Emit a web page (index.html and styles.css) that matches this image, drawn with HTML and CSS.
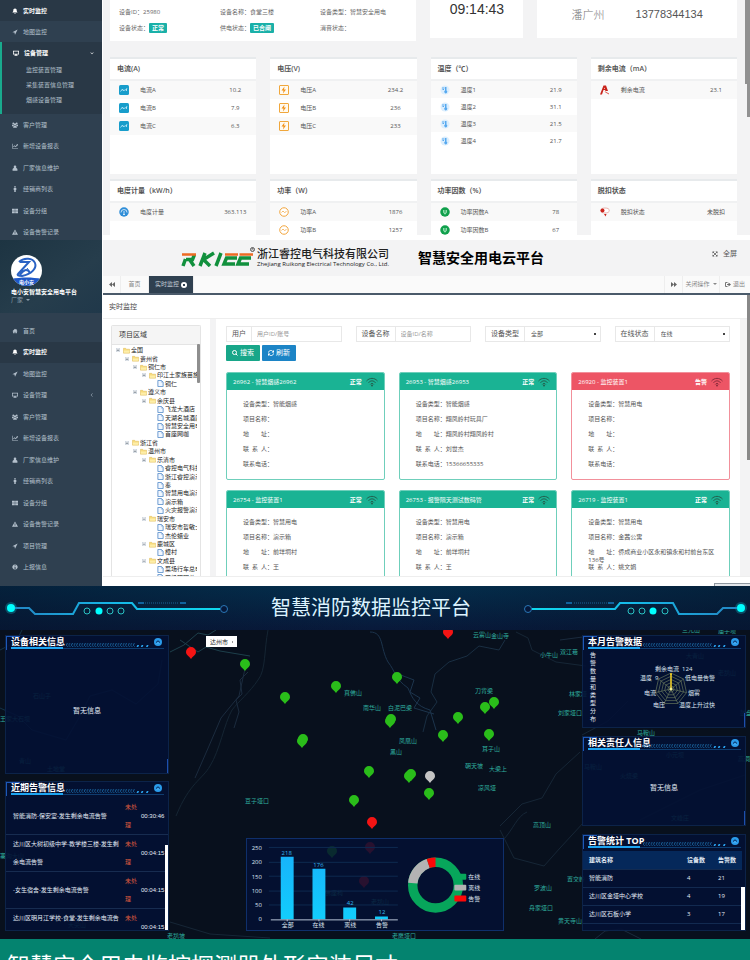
FILE: index.html
```html
<!DOCTYPE html>
<html lang="zh-CN">
<head>
<meta charset="utf-8">
<title>智慧安全用电云平台</title>
<link rel="stylesheet" href="styles.css">
</head>
<body>
<svg class="defs" aria-hidden="true">
  <defs>
    <symbol id="i-home" viewBox="0 0 16 16"><path d="M8 2 1 8.500h2V14h4v-4h2v4h4V8.500h2L12.500 6V3h-2v1.300z"/></symbol>
    <symbol id="i-bell" viewBox="0 0 16 16"><path d="M8 1c-3 0-4.500 2-4.500 5 0 3-1 4.500-2.500 6h14c-1.500-1.500-2.500-3-2.500-6 0-3-1.500-5-4.500-5zM6 13h4a2 2 0 0 1-4 0z"/></symbol>
    <symbol id="i-plane" viewBox="0 0 16 16"><path d="M15 1 1 8.500l5.500 1L8 15z"/></symbol>
    <symbol id="i-screen" viewBox="0 0 16 16"><path fill-rule="evenodd" d="M0 2h16v10h-6v1h2v2H4v-2h2v-1H0zm2 2v6h12V4z"/></symbol>
    <symbol id="i-users" viewBox="0 0 16 16"><circle cx="3.500" cy="4" r="2.500"/><circle cx="12.500" cy="4" r="2.500"/><circle cx="8" cy="6.500" r="3"/><path d="M0 7h4l1 3-2 1H0zM16 7h-4l-1 3 2 1h3zM3 15c0-4 2-5 5-5s5 1 5 5z"/></symbol>
    <symbol id="i-chart" viewBox="0 0 16 16"><path d="M0 2h1.500v11H16v1.500H0zM3 10l3.500-4 3 2.500L13 4l-1.500-1H16v4.500l-1.500-1.500-4.500 5-3-2.500L4 11.500z"/></symbol>
    <symbol id="i-user" viewBox="0 0 16 16"><circle cx="8" cy="5" r="3.500"/><path d="M1.500 15V12c0-3 2.500-4 6.500-4s6.500 1 6.500 4v3z"/></symbol>
    <symbol id="i-male" viewBox="0 0 16 16"><circle cx="8" cy="2.500" r="2.200"/><path d="M4.500 5h7v5.500H10V16H6v-5.500H4.500z"/></symbol>
    <symbol id="i-grid" viewBox="0 0 16 16"><path d="M0 2h7.500v5.500H0zM8.500 2H16v5.500H8.500zM0 8.500h7.500V14H0zM8.500 8.500H16V14H8.500z"/></symbol>
    <symbol id="i-warn" viewBox="0 0 16 16"><path fill-rule="evenodd" d="M8 1l8 14H0zM7 6v4.500h2V6zm0 5.500v2h2v-2z"/></symbol>
    <symbol id="i-info" viewBox="0 0 16 16"><path fill-rule="evenodd" d="M8 1a7 7 0 1 0 .010 0zM7 3.500h2.500v2H7zM6 7h3.500v4h1v1.500H6V11h1V8.500H6z"/></symbol>
    <symbol id="i-down" viewBox="0 0 16 16"><path d="M3 5l5 5 5-5 1 1.500-6 6-6-6z"/></symbol>
    <symbol id="i-left" viewBox="0 0 16 16"><path d="M11 2 5 8l6 6-1.500 1L3 8l6.500-7z"/></symbol>
    <symbol id="i-wave" viewBox="0 0 20 20"><rect width="20" height="20" rx="3" fill="#189dcb"/><path d="M3 13l4-5 2 4 2-2h2l3-3M15 7v5" fill="none" stroke="#d4f3ff" stroke-width="1.500"/></symbol>
    <symbol id="i-volt" viewBox="0 0 20 20"><rect x="1" y="1" width="18" height="18" rx="1" fill="#fffaf0" stroke="#f0a73c" stroke-width="2"/><path d="M11 3 5 11h4l-1 6 6-8h-4z" fill="#f29218"/></symbol>
    <symbol id="i-temp" viewBox="0 0 20 20"><circle cx="10" cy="10" r="9" fill="#dceefd"/><path d="M4 5h5v2H4zM5 8h3v2H5zM10 4h3v7a3 3 0 1 1-3 0z" fill="#57a9ef"/></symbol>
    <symbol id="i-leak" viewBox="0 0 20 20"><path fill-rule="evenodd" d="M0 19 7 1h5l4 11h-5l-1-2H7l-3 9zM8 8h2L9 5z" fill="#c9231b"/><path d="M9 12l9 5v2l-7-4z" fill="#df5147"/></symbol>
    <symbol id="i-meter" viewBox="0 0 20 20"><circle cx="10" cy="10" r="9.500" fill="#2f8ed8"/><path d="M4 11a6 6 0 0 1 12 0M10 15V8M8 15h4" fill="none" stroke="#fff" stroke-width="1.500"/></symbol>
    <symbol id="i-power" viewBox="0 0 20 20"><circle cx="10" cy="10" r="8.500" fill="#fff" stroke="#f2a63f" stroke-width="2"/><path d="M5 11l3-3 3 3 4-2" fill="none" stroke="#f2a63f" stroke-width="1.500"/></symbol>
    <symbol id="i-factor" viewBox="0 0 20 20"><circle cx="10" cy="10" r="9.500" fill="#10a04c"/><path d="M7 6v4a3 3 0 0 0 6 0V6M10 6v9" fill="none" stroke="#b8f0cc" stroke-width="1.500"/></symbol>
    <symbol id="i-trip" viewBox="0 0 20 20"><ellipse cx="10" cy="7" rx="8.500" ry="5" fill="#fff" stroke="#e39a93" stroke-width="1.500"/><circle cx="5" cy="7" r="4" fill="#cc241c"/><path d="M8 14h5l-2 5z" fill="#cc241c"/></symbol>
    <symbol id="i-wifi" viewBox="0 0 24 20"><g fill="none" stroke="currentColor" stroke-width="2"><path d="M1 8c6-7 16-7 22 0M5 11.500c4-5 10-5 14 0M8.500 15c2-3 5-3 7 0"/></g><circle cx="12" cy="17" r="2" fill="currentColor"/></symbol>
    <symbol id="i-folder" viewBox="0 0 16 14"><path d="M1 2h5l2 2h7v9H1z" fill="#f8dc7c" stroke="#d9b04a"/><path d="M2 7h13l-1 5H2z" fill="#fdeeaa"/></symbol>
    <symbol id="i-file" viewBox="0 0 14 16"><path d="M1 1h8l4 4v10H1z" fill="#f1f7ff" stroke="#5d90cc" stroke-width="2"/><path d="M9 1v4h4" fill="none" stroke="#5d90cc"/></symbol>
    <symbol id="i-minus" viewBox="0 0 10 10"><path d="M.500.500h9v9h-9z" fill="#fff" stroke="#8b9db0"/><path d="M2 4.500h6v1.500H2z" fill="#345"/></symbol>
    <symbol id="i-up" viewBox="0 0 16 16"><circle cx="8" cy="8" r="8" fill="#2a9bea"/><path d="M4 9l4-3.500L12 9" fill="none" stroke="#052050" stroke-width="2"/><path d="M5 11.500l3-2 3 2" fill="none" stroke="#7ccfff"/></symbol>
    <symbol id="pin" viewBox="-5 -5 10 12" overflow="visible"><path d="M0 7C-2 4-5 3-5 0a5 5 0 0 1 10 0c0 3-3 4-5 7z"/></symbol>
    <pattern id="hatch" width="3" height="4" patternUnits="userSpaceOnUse"><path d="M0 4 2 0" stroke="#1a6ba8" stroke-width="1"/></pattern>
    <symbol id="headline" viewBox="0 0 100 6" preserveAspectRatio="none"><rect width="80" height="4" y="1" fill="url(#hatch)"/><path d="M82 5l1-2h2l-1 2zM87 5l1-2h2l-1 2zM93 5l1-2h2l-1 2z" fill="#2aa4f0"/></symbol>
    <linearGradient id="bar" x1="0" y1="0" x2="0" y2="1"><stop offset="0" stop-color="#17b4fb"/><stop offset="1" stop-color="#12cdfc"/></linearGradient>
    <linearGradient id="wire"><stop offset="0" stop-color="#2387c4"/><stop offset=".5" stop-color="#16b9e8"/><stop offset="1" stop-color="#10d8ee"/></linearGradient>
    <g id="circuit">
      <circle cx="11" cy="22" r="6" fill="#0b7f96" opacity=".5"/><circle cx="11" cy="22" r="4" fill="#0ff"/>
      <path d="M15 22h14l6 6h38l6-11h53l5 6h83" fill="none" stroke="url(#wire)" stroke-width="2"/>
      <circle cx="224" cy="23" r="3.500" fill="#06183a" stroke="#2a78b8" stroke-width="1"/>
      <g fill="none" stroke="#2ac3c4"><circle cx="87" cy="25" r="3"/><circle cx="110" cy="25" r="3"/><circle cx="121" cy="25" r="3"/></g>
      <circle cx="99" cy="25" r="3.500" fill="#0ff"/>
      <path d="M138 17h6M180 17h6" stroke="#1679bd" stroke-width="1.500"/><path d="M145 17h34" stroke="#1b6298" stroke-dasharray="1 1"/>
    </g>
  </defs>
</svg>

<section class="device">
  <nav class="side">
    <a class="item dark" href="#"><svg><use href="#i-bell"/></svg>实时监控</a>
    <a class="item" href="#"><svg><use href="#i-plane"/></svg>地图监控</a>
    <div class="open">
      <a class="item" href="#"><svg><use href="#i-screen"/></svg>设备管理<svg class="arrow"><use href="#i-down"/></svg></a>
      <a class="sub" href="#">监控装置管理</a>
      <a class="sub" href="#">采集装置信息管理</a>
      <a class="sub" href="#">烟感设备管理</a>
    </div>
    <div class="rest">
      <a class="item" href="#"><svg><use href="#i-users"/></svg>客户管理</a>
      <a class="item" href="#"><svg><use href="#i-chart"/></svg>新增设备报表</a>
      <a class="item" href="#"><svg><use href="#i-user"/></svg>厂家信息维护</a>
      <a class="item" href="#"><svg><use href="#i-male"/></svg>经销商列表</a>
      <a class="item" href="#"><svg><use href="#i-grid"/></svg>设备分组</a>
      <a class="item" href="#"><svg><use href="#i-warn"/></svg>设备告警记录</a>
    </div>
  </nav>
  <div class="readings">
    <div class="summary">
      <div class="box facts">
        <span>设备ID：25980</span><span>设备名称：食堂三楼</span><span>设备类型：智慧安全用电</span>
        <span>设备状态：<b class="badge">正常</b></span><span>供电状态：<b class="badge">已合闸</b></span><span>消音状态：</span>
      </div>
      <div class="box clock">09:14:43</div>
      <div class="box contact"><span>潘广州</span><span class="phone">13778344134</span></div>
    </div>
    <div class="meters">
      <div class="meter"><h3>电流(A)</h3><table>
        <tr><td><svg><use href="#i-wave"/></svg></td><td>电流A</td><td>10.2</td></tr>
        <tr><td><svg><use href="#i-wave"/></svg></td><td>电流B</td><td>7.9</td></tr>
        <tr><td><svg><use href="#i-wave"/></svg></td><td>电流C</td><td>6.3</td></tr></table></div>
      <div class="meter"><h3>电压(V)</h3><table>
        <tr><td><svg><use href="#i-volt"/></svg></td><td>电压A</td><td>234.2</td></tr>
        <tr><td><svg><use href="#i-volt"/></svg></td><td>电压B</td><td>236</td></tr>
        <tr><td><svg><use href="#i-volt"/></svg></td><td>电压C</td><td>233</td></tr></table></div>
      <div class="meter tight"><h3>温度（℃）</h3><table>
        <tr><td><svg><use href="#i-temp"/></svg></td><td>温度1</td><td>21.9</td></tr>
        <tr><td><svg><use href="#i-temp"/></svg></td><td>温度2</td><td>31.1</td></tr>
        <tr><td><svg><use href="#i-temp"/></svg></td><td>温度3</td><td>21.5</td></tr>
        <tr><td><svg><use href="#i-temp"/></svg></td><td>温度4</td><td>21.7</td></tr></table></div>
      <div class="meter"><h3>剩余电流（mA）</h3><table>
        <tr><td><svg><use href="#i-leak"/></svg></td><td>剩余电流</td><td>23.1</td></tr></table></div>
      <div class="meter"><h3>电度计量（kW/h）</h3><table>
        <tr><td><svg><use href="#i-meter"/></svg></td><td>电度计量</td><td>363.113</td></tr></table></div>
      <div class="meter"><h3>功率（W）</h3><table>
        <tr><td><svg><use href="#i-power"/></svg></td><td>功率A</td><td>1876</td></tr>
        <tr><td><svg><use href="#i-power"/></svg></td><td>功率B</td><td>1257</td></tr></table></div>
      <div class="meter"><h3>功率因数（%）</h3><table>
        <tr><td><svg><use href="#i-factor"/></svg></td><td>功率因数A</td><td>78</td></tr>
        <tr><td><svg><use href="#i-factor"/></svg></td><td>功率因数B</td><td>67</td></tr></table></div>
      <div class="meter"><h3>脱扣状态</h3><table>
        <tr><td><svg><use href="#i-trip"/></svg></td><td>脱扣状态</td><td>未脱扣</td></tr></table></div>
    </div>
    <i class="scroll outer"></i><i class="scroll inner"></i>
  </div>
</section>

<section class="cloud">
  <div class="side">
    <div class="profile">
      <svg class="avatar" viewBox="0 0 31 31"><defs><clipPath id="round"><circle cx="15.500" cy="15.500" r="15.500"/></clipPath></defs><g clip-path="url(#round)"><path fill="#fff" d="M0 0h31v31H0z"/><path fill="#1f58c8" d="M0 24c10-2 21-2 31 0v7H0z"/><g fill="none" stroke="#2a62c4" stroke-width="2"><path d="M8 7c5-5 14-4 16 1s-3 11-13 13c-4 0-5-1-4-2L18 7H9M9 20c3-5 7-7 10-2"/><path d="M16 13l3 4" stroke-width="1"/></g></g><text x="15.500" y="29" text-anchor="middle" class="avatar-text">电小安</text></svg>
      <strong>电小安智慧安全用电平台</strong>
      <span>厂家 <i class="caret"></i></span>
    </div>
    <nav class="menu">
      <a class="item" href="#"><svg><use href="#i-home"/></svg>首页</a>
      <a class="item dark" href="#"><svg><use href="#i-bell"/></svg>实时监控</a>
      <a class="item" href="#"><svg><use href="#i-plane"/></svg>地图监控</a>
      <a class="item" href="#"><svg><use href="#i-screen"/></svg>设备管理<svg class="arrow"><use href="#i-left"/></svg></a>
      <a class="item" href="#"><svg><use href="#i-users"/></svg>客户管理</a>
      <a class="item" href="#"><svg><use href="#i-chart"/></svg>新增设备报表</a>
      <a class="item" href="#"><svg><use href="#i-user"/></svg>厂家信息维护</a>
      <a class="item" href="#"><svg><use href="#i-male"/></svg>经销商列表</a>
      <a class="item" href="#"><svg><use href="#i-grid"/></svg>设备分组</a>
      <a class="item" href="#"><svg><use href="#i-warn"/></svg>设备告警记录</a>
      <a class="item" href="#"><svg><use href="#i-plane"/></svg>项目管理</a>
      <a class="item" href="#"><svg><use href="#i-info"/></svg>上报信息</a>
    </nav>
  </div>
  <div class="work">
    <header class="brand">
      <svg class="logo" viewBox="0 0 76 20">
        <g fill="none" stroke="#11903d" stroke-width="4"><path d="M4 19l2.500-7M7 12.500h6.500l2-5M10.500 12.500 15 19M21 19l5-13M35 6 24.500 12.500 31 19M37 19l5-13M58 11H47.500l-2.500 6h11M72 11H61.500L59 17h11" stroke-width="3.500"/></g>
        <path d="M3 7.500h14M46 7.500h13M60.500 7.500H74" fill="none" stroke="#ed6b23" stroke-width="2.500"/>
        <circle cx="73.500" cy="2.500" r="2" fill="none" stroke="#333" stroke-width=".8"/><path d="M73 3.500V1.500h1v1l.500 1" stroke="#333" fill="none" stroke-width=".5"/>
      </svg>
      <div class="company"><b>浙江睿控电气科技有限公司</b><small>Zhejiang Ruikong Electrical Technology Co., Ltd.</small></div>
      <h1>智慧安全用电云平台</h1>
      <a class="full" href="#"><svg viewBox="0 0 12 12"><path d="M1 1h4L1 5zM11 1v4L7 1zM1 11V7l4 4zM11 11H7l4-4z" fill="#555"/><path d="M2 2l8 8M10 2l-8 8" stroke="#555" stroke-width="1.500"/></svg>全屏</a>
    </header>
    <div class="tabs">
      <button class="tab step" aria-label="向左"><svg viewBox="0 0 12 10"><path d="M6 0v10L0 5zM12 0v10L6 5z"/></svg></button>
      <a class="tab home" href="#">首页</a>
      <a class="tab active" href="#">实时监控 <svg viewBox="0 0 12 12"><circle cx="6" cy="6" r="6" fill="#fff"/><path d="M4 4l4 4M8 4l-4 4" stroke="#2f4050" stroke-width="2"/></svg></a>
      <span class="grow"></span>
      <button class="tab step" aria-label="向右"><svg viewBox="0 0 12 10"><path d="M0 0v10l6-5zM6 0v10l6-5z"/></svg></button>
      <button class="tab close">关闭操作<i class="caret"></i></button>
      <a class="tab quit" href="#"><svg viewBox="0 0 12 10"><path d="M5 1H1v8h4M4 5h5" fill="none" stroke="#777" stroke-width="2"/><path d="M7 1l5 4-5 4z"/></svg>退出</a>
    </div>
    <h2>实时监控</h2>
    <div class="split">
      <div class="treebox">
        <h3>项目区域</h3>
        <ul class="tree">
          <li><svg><use href="#i-minus"/></svg><svg><use href="#i-folder"/></svg>全国</li>
          <li class="l1"><svg><use href="#i-minus"/></svg><svg><use href="#i-folder"/></svg>贵州省</li>
          <li class="l2"><svg><use href="#i-minus"/></svg><svg><use href="#i-folder"/></svg>铜仁市</li>
          <li class="l3"><svg><use href="#i-minus"/></svg><svg><use href="#i-folder"/></svg>印江土家族苗族</li>
          <li class="l4"><svg><use href="#i-file"/></svg>铜仁</li>
          <li class="l2"><svg><use href="#i-minus"/></svg><svg><use href="#i-folder"/></svg>遵义市</li>
          <li class="l3"><svg><use href="#i-minus"/></svg><svg><use href="#i-folder"/></svg>余庆县</li>
          <li class="l4"><svg><use href="#i-file"/></svg>飞龙大酒店</li>
          <li class="l4"><svg><use href="#i-file"/></svg>天湖名城酒店</li>
          <li class="l4"><svg><use href="#i-file"/></svg>智慧安全用电</li>
          <li class="l4"><svg><use href="#i-file"/></svg>首座网咖</li>
          <li class="l1"><svg><use href="#i-minus"/></svg><svg><use href="#i-folder"/></svg>浙江省</li>
          <li class="l2"><svg><use href="#i-minus"/></svg><svg><use href="#i-folder"/></svg>温州市</li>
          <li class="l3"><svg><use href="#i-minus"/></svg><svg><use href="#i-folder"/></svg>乐清市</li>
          <li class="l4"><svg><use href="#i-file"/></svg>睿控电气科技</li>
          <li class="l4"><svg><use href="#i-file"/></svg>浙江睿控演示</li>
          <li class="l4"><svg><use href="#i-file"/></svg>秦</li>
          <li class="l4"><svg><use href="#i-file"/></svg>智慧用电演示</li>
          <li class="l4"><svg><use href="#i-file"/></svg>演示箱</li>
          <li class="l4"><svg><use href="#i-file"/></svg>火灾报警演示</li>
          <li class="l3"><svg><use href="#i-minus"/></svg><svg><use href="#i-folder"/></svg>瑞安市</li>
          <li class="l4"><svg><use href="#i-file"/></svg>瑞安市哲敏士</li>
          <li class="l4"><svg><use href="#i-file"/></svg>杰伦蜡业</li>
          <li class="l3"><svg><use href="#i-minus"/></svg><svg><use href="#i-folder"/></svg>鹿城区</li>
          <li class="l4"><svg><use href="#i-file"/></svg>樟村</li>
          <li class="l3"><svg><use href="#i-minus"/></svg><svg><use href="#i-folder"/></svg>文成县</li>
          <li class="l4"><svg><use href="#i-file"/></svg>菜场行车总电</li>
          <li class="l4"><svg><use href="#i-file"/></svg>菜场照明总电</li>
        </ul>
        <i class="thumb"></i>
      </div>
      <div class="list">
        <form class="filters">
          <div class="field"><label for="f-user">用户</label><input id="f-user" placeholder="用户ID/账号"></div>
          <div class="field"><label for="f-name">设备名称</label><input id="f-name" placeholder="设备ID/名称"></div>
          <div class="field"><label for="f-type">设备类型</label><select id="f-type"><option>全部</option></select></div>
          <div class="field"><label for="f-line">在线状态</label><select id="f-line"><option>在线</option></select></div>
        </form>
        <div class="actions">
          <button class="search"><svg viewBox="0 0 12 12"><path d="M8 8l3 3" stroke="#fff" stroke-width="2"/><circle cx="5" cy="5" r="4" fill="none" stroke="#fff" stroke-width="2"/></svg>搜索</button>
          <button class="reload"><svg viewBox="0 0 12 12"><path d="M1 5c1-5 7-5 9-2M11 7c-1 5-7 5-9 2" fill="none" stroke="#fff" stroke-width="2"/><path d="M12 0v5H7zM0 12V7h5z" fill="#fff"/></svg>刷新</button>
        </div>
        <div class="cards">
          <article><header>26962 - 智慧烟感26962<b>正常</b><svg><use href="#i-wifi"/></svg></header><p>设备类型：智能烟感</p><p>项目名称：</p><p>地　　址：</p><p>联&ensp;系&ensp;人：</p><p>联系电话：</p></article>
          <article><header>26953 - 智慧烟感26953<b>正常</b><svg><use href="#i-wifi"/></svg></header><p>设备类型：智能烟感</p><p>项目名称：翔凤岭村玩具厂</p><p>地　　址：翔凤岭村翔凤岭村</p><p>联&ensp;系&ensp;人：刘世杰</p><p>联系电话：15366655335</p></article>
          <article class="alert"><header>26920 - 监控装置1<b>告警</b><svg><use href="#i-wifi"/></svg></header><p>设备类型：智慧用电</p><p>项目名称：</p><p>地　　址：</p><p>联&ensp;系&ensp;人：</p><p>联系电话：</p></article>
          <article><header>26754 - 监控装置1<b>正常</b><svg><use href="#i-wifi"/></svg></header><p>设备类型：智慧用电</p><p>项目名称：演示箱</p><p>地　　址：前垟垌村</p><p>联&ensp;系&ensp;人：王</p></article>
          <article><header>26753 - 报警隔天测试数码管<b>正常</b><svg><use href="#i-wifi"/></svg></header><p>设备类型：智慧用电</p><p>项目名称：演示箱</p><p>地　　址：前垟垌村</p><p>联&ensp;系&ensp;人：王</p></article>
          <article><header>26719 - 监控装置1<b>正常</b><svg><use href="#i-wifi"/></svg></header><p>设备类型：智慧用电</p><p>项目名称：金茜公寓</p><p class="wrap">地　　址：侨成商业小区永和镇永和村前台东区<br>136号</p><p>联&ensp;系&ensp;人：姚文娟</p></article>
        </div>
      </div>
    </div>
    <i class="scroll page"></i><i class="notice"></i>
  </div>
</section>

<section class="fire">
  <header class="banner">
    <svg class="wire-left" viewBox="0 0 240 44"><use href="#circuit"/></svg>
    <h1>智慧消防数据监控平台</h1>
    <svg class="wire-right" viewBox="-8 0 248 44"><use href="#circuit" transform="translate(242 0) scale(-1 1)"/></svg>
  </header>
  <div class="stage">
    <svg class="map" viewBox="0 630 750 309" preserveAspectRatio="xMidYMid slice">
      <g fill="none" stroke="#1b2b3e">
        <path d="M170 652l14-7 14-12 10 2 8-5M180 640l18 12 8-5 14 4 30 5" stroke="#1d3f4b"/>
        <path d="M268 630c-4 20-2 40-10 50-8 12-20 22-26 30-8 14-12 40-22 56-8 14-20 16-34 50" stroke="#152533"/>
        <path d="M248 672l-8 8 2 14-6 6 3 12-5 16"/><path d="M246 664l-7 32-18 22-12 28-14 32"/>
        <path d="M370 632c14 0 10 16 18 30 8 10 6 16 20 26 4 10 8 18 22 22l6 20M398 674l16 6-4 12 10 6-6 10 20 6" stroke="#1c344c"/>
        <path d="M505 640l-6 10-20-4-12 10-18 6-14 12-4 18 6 10-10 14-4 16" stroke="#192e42"/>
        <path d="M516 632l12 6 4 12 24 12 30 4M500 826l22-22 20-6 14-24 24-22M500 830l14 28 30 8 16-18 24-26M503 840c10-10 14-24 24-28M582 735l26-14 20-20M640 820l60-30 45-15M170 922l40 12 60 4" stroke="#162636"/>
        <path d="M0 650l16-8 6-12M0 708l18 8 14 14 34 10 14-24 10-20 22-6 24 14 22-20 4-24" stroke="#143348"/>
        <path d="M595 939l10-8 16-2 20 10M560 640l30-4"/>
      </g>
      <g class="places">
        <text x="473" y="637">云雾山</text><text x="491" y="638">金山寺</text><text x="540" y="657">小牛山</text><text x="560" y="654">双江巷</text>
        <text x="344" y="695">真佛山</text><text x="363" y="710">南华山</text><text x="388" y="710">白泥巴梁</text><text x="475" y="693">刀背梁</text>
        <text x="399" y="743">凤凰山</text><text x="390" y="754">黑山</text><text x="482" y="751">耳子山</text><text x="465" y="768">朝天坡</text><text x="489" y="771">大梁上</text><text x="478" y="790">凉风垭</text>
        <text x="245" y="803">豆子垭口</text><text x="533" y="827">高顶山</text><text x="534" y="890">罗波山</text><text x="529" y="910">舟家垭口</text><text x="567" y="881">置交岭</text><text x="558" y="923">黄天寺山</text>
        <text x="569" y="696">林家垭</text><text x="558" y="715">刘家垭口</text><text x="637" y="735">马鞍山</text><text x="718" y="633">庙子坝</text><text x="682" y="632">三元山</text><text x="167" y="938">老鸹坡</text><text x="392" y="938">老鹰垭口</text>
        <text x="33" y="698">石山子</text><text x="0" y="721">王家大石坝</text><text x="19" y="763">青山</text><text x="47" y="771">土地堂</text><text x="0" y="858">寨沟大山</text><text x="68" y="927">大尖山</text>
        <text x="686" y="658">大青山</text><text x="718" y="675">老鸹山</text><text x="666" y="757">小元坝</text><text x="584" y="769">马鞍山</text><text x="620" y="778">火烧梁</text><text x="671" y="820">文峰庄</text>
        <text x="740" y="715">鼓盘山</text><text x="738" y="761">高洞子</text><text x="325" y="895">佛座椅</text><text x="371" y="904">老鸹山</text>
      </g>
      <g fill="#2abd1a">
        <use href="#pin" x="240" y="659" width="10" height="12"/><use href="#pin" x="280" y="692" width="10" height="12"/><use href="#pin" x="331" y="681" width="10" height="12"/><use href="#pin" x="392" y="672" width="10" height="12"/>
        <use href="#pin" x="298" y="734" width="10" height="12"/><use href="#pin" x="297" y="736" width="10" height="12"/><use href="#pin" x="386" y="714" width="10" height="12"/><use href="#pin" x="385" y="716" width="10" height="12"/>
        <use href="#pin" x="364" y="766" width="10" height="12"/><use href="#pin" x="406" y="769" width="10" height="12"/><use href="#pin" x="404" y="771" width="10" height="12"/><use href="#pin" x="424" y="788" width="10" height="12"/>
        <use href="#pin" x="349" y="795" width="10" height="12"/><use href="#pin" x="438" y="730" width="10" height="12"/><use href="#pin" x="453" y="712" width="10" height="12"/><use href="#pin" x="480" y="702" width="10" height="12"/>
        <use href="#pin" x="489" y="697" width="10" height="12"/><use href="#pin" x="484" y="729" width="10" height="12"/><use href="#pin" x="327" y="846" width="10" height="12"/>
      </g>
      <use href="#pin" x="425" y="771" width="10" height="12" fill="#c4c4c4"/>
      <g fill="#f41414"><use href="#pin" x="186" y="647" width="10" height="12"/><use href="#pin" x="443" y="627" width="10" height="12"/><use href="#pin" x="367" y="817" width="10" height="12"/><use href="#pin" x="365" y="842" width="10" height="12"/><use href="#pin" x="359" y="876" width="10" height="12"/></g>
    </svg>

    <div class="col left">
      <section class="panel"><h3><span>设备相关信息</span><svg class="rule"><use href="#headline"/></svg><svg class="fold"><use href="#i-up"/></svg></h3><p class="none">暂无信息</p></section>
      <section class="panel alarms"><h3><span>近期告警信息</span><svg class="rule"><use href="#headline"/></svg><svg class="fold"><use href="#i-up"/></svg></h3>
        <table>
          <tr><td>智能消防-保安室-发生剩余电流告警</td><td>未处理</td><td>00:30:46</td></tr>
          <tr><td>达川区大树初级中学-教学楼三楼-发生剩<br>余电流告警</td><td>未处理</td><td>00:04:15</td></tr>
          <tr><td>-女生宿舍-发生剩余电流告警</td><td>未处理</td><td>00:04:15</td></tr>
          <tr><td>达川区明月江学校-食堂-发生剩余电流告<br>警</td><td>未处理</td><td>00:04:15</td></tr>
        </table><i class="bar"></i></section>
    </div>

    <div class="center">
      <select class="city" aria-label="城市"><option>达州市</option></select>
      <section class="chart">
        <svg viewBox="246 839 258 92">
          <g stroke="#0e2a50"><path d="M268 847.500h130M268 862.500h130M268 876.500h130M268 891.500h130M268 905.500h130"/></g>
          <g class="axis" text-anchor="end"><text x="261" y="850">250</text><text x="261" y="864">200</text><text x="261" y="879">150</text><text x="261" y="893">100</text><text x="261" y="908">50</text><text x="261" y="922">0</text></g>
          <g fill="url(#bar)"><path d="M280 857h13v63h-13zM312 869h13v51h-13zM343 908h13v12h-13zM375 917h13v3h-13z"/></g>
          <path d="M270 920.500h128M286.500 920v2M318.500 920v2M349.500 920v2M381.500 920v2" stroke="#b9c6d8"/>
          <g class="value" text-anchor="middle"><text x="286" y="855">218</text><text x="318" y="867">176</text><text x="350" y="906">42</text><text x="382" y="915">12</text></g>
          <g class="axis" text-anchor="middle"><text x="287" y="928">全部</text><text x="318" y="928">在线</text><text x="350" y="928">离线</text><text x="382" y="928">告警</text></g>
          <g fill="none" stroke-width="9.500" transform="rotate(-90 436 885.500)">
            <circle cx="436" cy="885.500" r="23" stroke="#07a65b"/>
            <circle cx="436" cy="885.500" r="23" pathLength="230" stroke="#b3b3b3" stroke-dasharray="42 230" stroke-dashoffset="-176"/>
            <circle cx="436" cy="885.500" r="23" pathLength="230" stroke="#fb0808" stroke-dasharray="12 230" stroke-dashoffset="-218"/>
          </g>
          <rect x="455" y="874" width="12" height="6" rx="1" fill="#07a65b"/><rect x="455" y="885" width="12" height="6" rx="1" fill="#b3b3b3"/><rect x="455" y="896" width="12" height="6" rx="1" fill="#fb0808"/>
          <g class="axis"><text x="469" y="879">在线</text><text x="469" y="890">离线</text><text x="469" y="901">告警</text></g>
        </svg>
      </section>
    </div>

    <div class="col right">
      <section class="panel"><h3><span>本月告警数据</span><svg class="rule"><use href="#headline"/></svg><svg class="fold"><use href="#i-up"/></svg></h3>
        <div class="radar"><p>告警数量和类型分布</p>
          <svg viewBox="600 650 145 77"><g fill="none" stroke="#66765c" stroke-width=".7">
            <path d="M671 674l12.500 6 3 13.600-8.600 10.900h-13.800l-8.600-10.900 3-13.600z"/>
            <path d="M671 677.200l10 4.800 2.500 10.900-7 8.700h-11l-7-8.700 2.500-10.900z"/><path d="M671 680.400l7.500 3.600 1.800 8.200-5.200 6.500h-8.200l-5.200-6.500 1.800-8.200z"/><path d="M671 683.600l5 2.400 1.300 5.500-3.500 4.300h-5.600l-3.500-4.300 1.300-5.500zM671 686.800l2.500 1.200.6 2.700-1.700 2.200h-2.800l-1.700-2.200.6-2.700z"/>
            <path d="M671 690v-16M671 690l12.500-10M671 690l15.500 3.600M671 690l6.900 14.500M671 690l-6.900 14.500M671 690l-15.500 3.600M671 690l-12.500-10"/></g>
            <path d="M671 675v16" stroke="#f4cf23" stroke-width="1.500"/><circle cx="671" cy="675" r="1" fill="#f4cf23"/><circle cx="671" cy="690" r="1.500" fill="#f4ef93"/>
            <g class="axis"><text x="655" y="672">剩余电流&#160; 124</text><text x="640" y="681">温度&#160; 9</text><text x="685" y="681">低电量告警</text><text x="644" y="696">电流</text><text x="688" y="696">烟雾</text><text x="653" y="708">电压</text><text x="679" y="708">温度上升过快</text></g>
          </svg></div></section>
      <section class="panel"><h3><span>相关责任人信息</span><svg class="rule"><use href="#headline"/></svg><svg class="fold"><use href="#i-up"/></svg></h3><p class="none">暂无信息</p></section>
      <section class="panel top"><h3><span>告警统计 TOP</span><svg class="rule"><use href="#headline"/></svg><svg class="fold"><use href="#i-up"/></svg></h3>
        <table>
          <tr><th>建筑名称</th><th>设备数</th><th>告警数</th></tr>
          <tr><td>智能消防</td><td>4</td><td>21</td></tr>
          <tr><td>达川区金垭中心学校</td><td>4</td><td>19</td></tr>
          <tr><td>达川区石板小学</td><td>3</td><td>17</td></tr>
        </table><i class="bar"></i></section>
    </div>
  </div>
</section>

<footer class="caption">智慧安全用电监控探测器外形安装尺寸</footer>
</body>
</html>
```
FILE: styles.css
```css
* { box-sizing: border-box; margin: 0; padding: 0; }
body { font: 6px/8px "Open Sans", "Noto Sans CJK SC", sans-serif; color: #555; background: #fff; overflow: hidden; }
a { color: inherit; text-decoration: none; }
button, input, select { font: inherit; color: inherit; border: 0; background: none; border-radius: 0; }
ul { list-style: none; }
table { border-collapse: collapse; width: 100%; }
i { font-style: normal; }
.defs { position: absolute; width: 0; height: 0; }

/* sidebars */
.side { flex: 0 0 103px; background: #2f4050; color: #b4c0cc; display: flex; flex-direction: column; border-right: 1px solid #fff; }
.item { display: flex; align-items: center; flex: none; height: 21px; padding-left: 12px; gap: 5px; white-space: nowrap; }
.item svg { width: 6px; height: 6px; fill: currentColor; flex: none; }
.item .arrow { width: 4px; height: 4px; margin-left: auto; margin-right: 8px; }
.dark { background: #293846; color: #fff; font-weight: 700; }
.open { flex: none; background: #293846; border-left: 2px solid #19aa8d; height: 72px; }
.open .item { color: #fff; font-weight: 700; padding-left: 11px; }
.sub { display: block; line-height: 15px; padding-left: 24px; }
.rest, .menu { display: grid; grid-auto-rows: 1fr; }
.rest { flex: none; height: 129px; }
.rest .item, .menu .item { height: auto; }

/* device readings */
.device { display: flex; height: 240px; overflow: hidden; }
.readings { flex: 1; position: relative; background: #f3f3f4; padding: 0 13px 0 7px; border-bottom: 5px solid #fff; overflow: hidden; }
.summary { display: grid; grid-template-columns: 307fr 93fr 200fr; gap: 14px; height: 57px; align-items: start; }
.box { background: #fff; height: 38px; }
.facts { height: 41px; display: grid; grid-template-columns: 101px 100px 1fr; grid-template-rows: 16px 16px; align-items: center; padding: 4px 0 0 9px; color: #666; }
.badge { display: inline-block; background: #1ab0a8; color: #fff; line-height: 10px; padding: 0 3px; border-radius: 1px; }
.clock { font: 14px/18px "Liberation Sans", sans-serif; text-align: center; color: #333; }
.contact { display: flex; justify-content: center; gap: 31px; font: 11px/28px "Noto Sans CJK SC", sans-serif; color: #777; font-weight: 300; }
.phone { font: 11px/28px "Liberation Sans", sans-serif; color: #555; }
.meters { display: grid; grid-template-columns: repeat(4, 1fr); gap: 5px 14px; }
.meter { background: #fff; height: 117px; border-top: 2px solid #e7eaec; }
.meter h3 { font-size: 7px; font-weight: 600; line-height: 20px; padding-left: 7px; height: 22px; border-bottom: 2px solid #f0f1f2; color: #555; }
.meter tr { height: 18px; }
.tight tr { height: 17px; }
.meter tr:nth-child(odd) { background: #f9f9f9; }
.meter td { vertical-align: middle; }
.meter td:first-child { width: 30px; padding-left: 9px; }
.meter td:last-child { text-align: center; width: 42px; padding-right: 0; }
.meter svg { display: block; width: 10px; height: 10px; }
.scroll { position: absolute; background: #919191; right: 0; top: 0; }
.outer { width: 5px; height: 84px; }
.inner { width: 3px; height: 117px; }

/* cloud platform */
.cloud { display: flex; height: 346px; overflow: hidden; }
.profile { flex: none; height: 73px; padding: 15px 0 0 11px; background: linear-gradient(145deg, #1d3442, #263d4c 60%, #20384a); display: flex; flex-direction: column; }
.profile strong { color: #fff; margin-top: 2px; white-space: nowrap; }
.profile span { color: #8fa0ae; }
.avatar { width: 31px; height: 31px; }
.avatar-text { font-size: 5px; fill: #fff; font-weight: 700; }
.caret { display: inline-block; border: 2px solid transparent; border-top-color: currentColor; border-bottom: 0; margin: 0 0 1px 1px; }
.menu { flex: 1; padding: 7px 0 8px; }
.work { flex: 1; min-width: 0; position: relative; display: flex; flex-direction: column; padding-bottom: 9px; }
.brand { display: flex; align-items: center; height: 36px; background: #f3f3f4; padding: 0 13px 0 76px; flex: none; color: #222; }
.logo { width: 76px; height: 20px; flex: none; margin-bottom: 3px; }
.company { margin-left: 2px; display: flex; flex-direction: column; }
.company b { font-size: 11px; line-height: 12px; font-weight: 500; }
.company small { font: 6px/8px "Open Sans", sans-serif; white-space: nowrap; }
.brand h1 { font-size: 14px; line-height: 18px; color: #000; margin-left: 29px; white-space: nowrap; }
.full { margin-left: auto; display: flex; gap: 5px; align-items: center; color: #555; font-size: 7px; margin-bottom: 8px; }
.full svg { width: 6px; height: 6px; }
.tabs { display: flex; height: 19px; flex: none; background: #fafafa; border-bottom: 2px solid #4a5a6a; line-height: 17px; }
.tab { border-right: 1px solid #eee; color: #888; display: flex; align-items: center; justify-content: center; gap: 2px; white-space: nowrap; }
.tab svg { width: 6px; height: 5px; fill: #666; }
.step { width: 18px; }
.home { width: 28px; }
.active { background: #2f4050; color: #c3ccd6; width: 45px; }
.active svg { width: 6px; height: 6px; }
.grow { flex: 1; border-right: 1px solid #eee; }
.close { width: 37px; }
.quit { width: 30px; border: 0; }
.work h2 { font-size: 7px; font-weight: 400; line-height: 23px; padding-left: 6px; flex: none; border-bottom: 1px solid #eee; color: #444; }
.split { flex: 1; min-height: 0; display: flex; border-bottom: 1px solid #eee; }
.treebox { flex: 0 0 90px; margin: 6px 9px 0 8px; border: 1px solid #e4e4e4; border-bottom: 0; position: relative; overflow: hidden; border-radius: 2px 2px 0 0; }
.treebox h3 { font-size: 7px; font-weight: 400; line-height: 18px; padding-left: 7px; background: #f5f5f5; border-bottom: 1px solid #e4e4e4; color: #333; }
.tree { display: grid; grid-auto-rows: 1fr; height: 236px; margin: 1px 3px 0 4px; overflow: hidden; color: #222; }
.tree li { display: flex; align-items: center; white-space: nowrap; gap: 1px; min-height: 0; line-height: 8px; }
.tree svg { width: 7px; height: 7px; flex: none; }
.tree svg:first-child:not(:last-child) { width: 4px; height: 4px; margin-right: 2px; }
.tree .l1 { padding-left: 9px; }
.tree .l2 { padding-left: 17px; }
.tree .l3 { padding-left: 26px; }
.tree .l4 { padding-left: 41px; }
.thumb { position: absolute; right: 0; top: 18px; width: 3px; height: 39px; background: #8e8e8e; border-radius: 1px; }
.list { flex: 1; min-width: 0; border-left: 6px solid #f3f3f4; border-right: 10px solid #f3f3f4; padding: 7px 10px 0; overflow: hidden; }
.filters { display: grid; grid-template-columns: repeat(4, minmax(0, 1fr)); gap: 14px; }
.field { display: flex; border: 1px solid #e8e8e8; height: 16px; font-size: 7px; }
.field label { padding: 0 5px; line-height: 14px; border-right: 1px solid #e8e8e8; white-space: nowrap; color: #555; }
.field input { flex: 1; min-width: 0; padding: 0 5px; font-size: 6px; }
.field input::placeholder { color: #999; }
.field select { flex: 1; min-width: 0; padding: 0 6px; appearance: none; font-size: 6px; background: conic-gradient(from -27deg at 50% 100%, #444 54deg, transparent 0) right 3px center / 4px 3px no-repeat; }
.actions { display: flex; gap: 2px; margin: 3px 0 11px; }
.actions button { height: 16px; padding: 0 6px; color: #fff; font-size: 7px; display: flex; align-items: center; gap: 2px; border-radius: 1px; }
.actions svg { width: 6px; height: 6px; }
.search { background: #18a689; }
.reload { background: #1c84c6; }
.cards { display: grid; grid-template-columns: repeat(3, minmax(0, 1fr)); gap: 10px 14px; }
article { height: 108px; border: 1px solid #6fcfbb; border-radius: 2px; overflow: hidden; }
article header { display: flex; align-items: center; height: 17px; background: #1ab394; color: #fff; padding: 0 6px; margin-bottom: 7px; }
article header b { margin-left: auto; margin-right: 4px; }
article header svg { width: 12px; height: 10px; color: #24604f; }
article p { line-height: 15px; padding-left: 16px; white-space: nowrap; color: #555; }
article .wrap { line-height: 8px; height: 15px; padding-top: 3px; }
article.alert { border-color: #f2909b; }
.alert header { background: #ed5565; }
.alert header svg { color: #8c2c3c; }
.page { top: 55px; width: 3px; height: 165px; background: #888; }
.notice { position: absolute; right: 0; bottom: 0; width: 36px; height: 3px; background: #e3e6ea; border-top: 1px solid #8f979f; border-left: 1px solid #8f979f; }

/* fire dashboard */
.fire { background: #08101d; color: #e3ecf6; height: 353px; display: flex; flex-direction: column; }
.banner { height: 44px; flex: none; display: flex; justify-content: space-between; align-items: center; background: linear-gradient(90deg, #05142b88, #06305500 50%, #05142b88), linear-gradient(#04304e, #08193a); }
.banner svg { height: 44px; flex: none; }
.wire-left { width: 240px; }
.wire-right { width: 248px; }
.banner h1 { font-size: 20px; line-height: 42px; font-weight: 400; color: #dcf3ff; white-space: nowrap; }
.stage { position: relative; flex: 1; display: flex; padding: 5px 4px 8px 5px; min-height: 0; overflow: hidden; }
.map { position: absolute; inset: 0; width: 100%; height: 100%; }
.places text { font-size: 6px; fill: #2fae9f; }
.col { flex: 0 0 164px; display: grid; position: relative; }
.left { grid-template-rows: 139fr 150fr; gap: 7px; }
.right { grid-template-rows: 93fr 90fr 97fr; gap: 8px; }
.panel { background: linear-gradient(#1d58b8, #1d58b8) left top / 1px 14px no-repeat, linear-gradient(#1d58b8, #1d58b8) left top / 14px 1px no-repeat, linear-gradient(#1d4fae, #1d4fae) right bottom / 1px 14px no-repeat, rgba(3, 17, 52, .9); border: 1px solid #0c2349; position: relative; overflow: hidden; min-height: 0; display: flex; flex-direction: column; }
.panel h3 { display: flex; align-items: flex-end; height: 13px; flex: none; margin: 0 4px 0 5px; border-bottom: 1px solid #0f3c6e; font-size: 9px; line-height: 11px; color: #fff; white-space: nowrap; }
.panel h3 span { border-bottom: 2px solid #1da5f2; width: 52px; margin-bottom: -1px; flex: none; }
.rule { flex: 1; height: 6px; margin-left: 3px; }
.fold { width: 8px; height: 8px; margin: 0 2px 2px 2px; }
.none { margin: auto; font-size: 7px; }
.alarms table { margin-top: 3px; line-height: 18px; }
.alarms tr { border-bottom: 1px solid #172c50; height: 36px; }
.alarms td { white-space: nowrap; vertical-align: middle; }
.alarms td:nth-child(1) { padding-left: 7px; width: 119px; }
.alarms td:nth-child(2) { color: #dd5b3f; white-space: normal; width: 12px; }
.alarms td:nth-child(3) { padding-left: 4px; font-family: "Liberation Sans", sans-serif; }
.bar { position: absolute; right: 0; bottom: 0; width: 4px; height: 85px; background: #fff; }
.alarms .bar { width: 3px; }
.center { flex: 1; min-width: 0; position: relative; display: flex; flex-direction: column; justify-content: space-between; align-items: flex-start; padding-left: 37px; }
.city { appearance: none; background: conic-gradient(from -27deg at 50% 100%, #999 54deg, transparent 0) right 3px center / 3px 2px no-repeat #fff; color: #222; height: 11px; width: 31px; padding: 0 4px; margin-top: 1px; }
.chart { width: 258px; margin-left: 40px; border: 1px solid #0f2f6b; background: rgba(3, 17, 52, .85); }
.chart svg { display: block; width: 100%; }
.axis text { font-size: 6px; fill: #dde6f0; }
.value text { font-size: 6px; fill: #35b9ee; }
.radar { display: flex; flex: 1; min-height: 0; }
.radar p { width: 7px; margin: 2px 0 0 7px; line-height: 8px; word-break: break-all; }
.radar svg { flex: none; width: 145px; height: 77px; margin-left: 4px; }
.top table { margin-top: 3px; width: 159px; }
.top tr { height: 18px; border-bottom: 1px solid #122a50; }
.top th, .top td { text-align: left; }
.top th { background: #05285a; }
.top th:first-child, .top td:first-child { padding-left: 6px; width: 104px; }
.top th:nth-child(2) { width: 31px; }
.top .bar { height: 43px; }

.caption { background: #04836f; color: #fff; font-size: 23px; line-height: 34px; height: 21px; padding: 9px 0 0 7px; overflow: hidden; white-space: nowrap; }
```
